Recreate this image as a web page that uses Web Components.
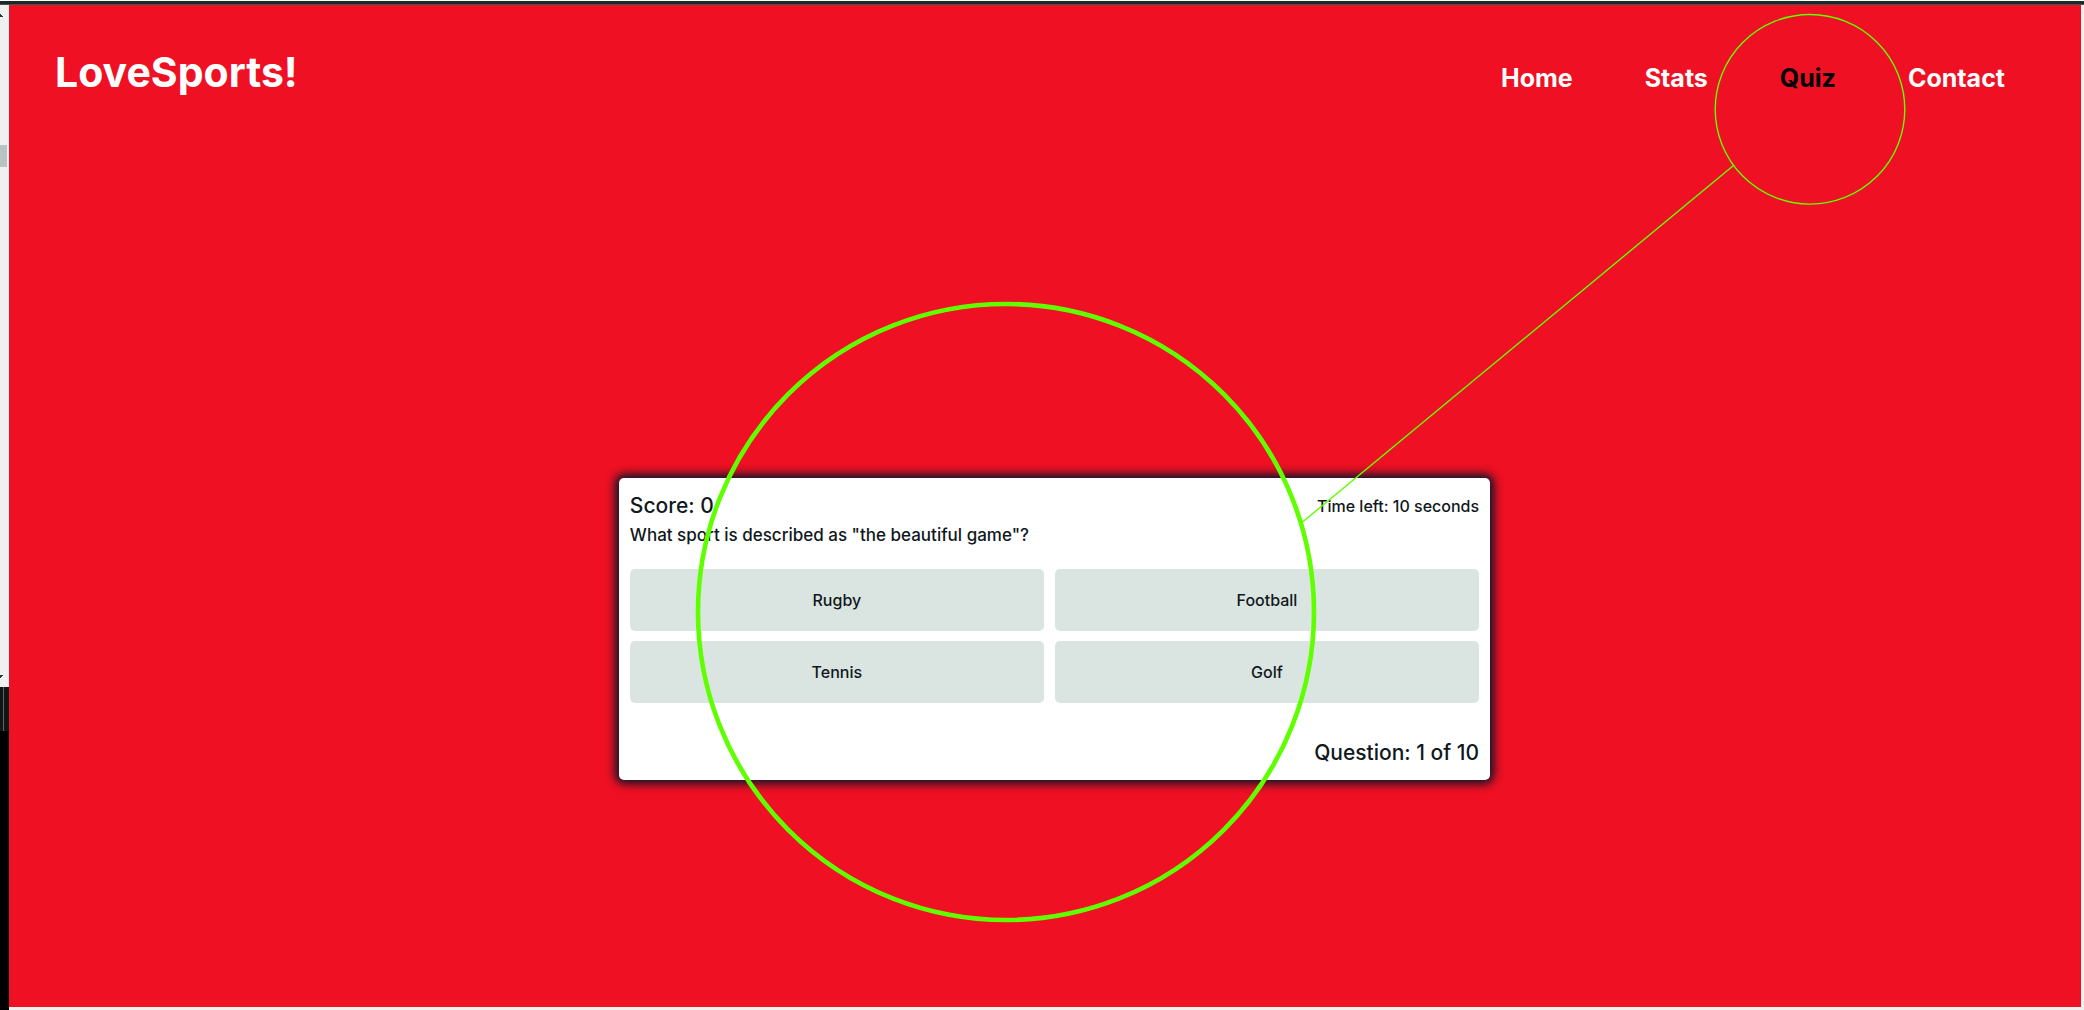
<!DOCTYPE html>
<html lang="en">
<head>
<meta charset="utf-8">
<title>LoveSports!</title>
<style>
html, body { margin: 0; height: 100%; }
body { font-family: Inter, "Liberation Sans", sans-serif; background: #fff; overflow: hidden; }
</style>
</head>
<body>
<sports-frame>
  <site-header>
    <nav-link href="#home">Home</nav-link>
    <nav-link href="#stats">Stats</nav-link>
    <nav-link href="#quiz" current>Quiz</nav-link>
    <nav-link href="#contact">Contact</nav-link>
  </site-header>
  <quiz-card>
    <quiz-answer>Rugby</quiz-answer>
    <quiz-answer>Football</quiz-answer>
    <quiz-answer>Tennis</quiz-answer>
    <quiz-answer>Golf</quiz-answer>
  </quiz-card>
</sports-frame>
<script>
function define(name, markup, setup) {
  customElements.define(name, class extends HTMLElement {
    constructor() {
      super();
      this.attachShadow({ mode: "open" }).innerHTML = markup;
    }
    connectedCallback() { if (setup) setup(this, this.shadowRoot); }
  });
}

define("nav-link", `
<style>
:host { display: block; }
a { color: #fff; text-decoration: none; font-size: 25px; line-height: 32px; font-weight: 700; }
:host([current]) a { color: #000; }
</style>
<a><slot></slot></a>`, (host, root) => {
  root.querySelector("a").href = host.getAttribute("href");
});

define("site-header", `
<style>
:host { display: block; color: #fff; }
header { display: flex; justify-content: space-between; align-items: flex-start; padding: 41px 76px 0 46px; }
h1 { margin: 0; font-size: 41px; line-height: 52px; font-weight: 700; }
nav { display: flex; gap: 72px; padding-top: 16px; }
</style>
<header><h1>LoveSports!</h1><nav aria-label="Main"><slot></slot></nav></header>`);

define("quiz-answer", `
<style>
:host { display: block; }
button { display: block; width: 100%; border: 0; border-radius: 5px; margin: 0; padding: 21px 0; background: #dae4e0;
  color: #101820; font-family: inherit; font-size: 16px; line-height: 20px; font-weight: 500; }
</style>
<button type="button"><slot></slot></button>`);

define("quiz-card", `
<style>
:host { display: block; }
section { box-sizing: border-box; padding: 15px 11px 14px; background: #fff; color: #101820; border-radius: 5px;
  box-shadow: 0 0 10px 4px #0a1428; }
.top { display: flex; justify-content: space-between; align-items: center; line-height: 26px; }
.score { font-size: 21px; font-weight: 500; }
.time { font-size: 16px; font-weight: 500; }
h2 { margin: 3px 0 21px; font-size: 17px; line-height: 26px; font-weight: 500; }
.answers { display: grid; grid-template-columns: auto auto; gap: 10px 11px; }
.count { margin: 36px 0 0; text-align: right; font-size: 21px; line-height: 27px; font-weight: 500; }
</style>
<section>
  <div class="top"><span class="score">Score: 0</span><span class="time">Time left: 10 seconds</span></div>
  <h2>What sport is described as "the beautiful game"?</h2>
  <div class="answers"><slot></slot></div>
  <p class="count">Question: 1 of 10</p>
</section>`, (host, root) => {
  // Slotted answers take part in the grid directly.
  root.querySelector("slot").style.display = "contents";
});

define("scroll-rail", `
<style>
:host { display: flex; flex-direction: column; width: 9px; background: #000; }
.track { height: calc(68% - 1px); background: #eef1f0; display: flex; flex-direction: column; }
.track svg { display: block; flex: none; }
.thumb { width: 7px; height: 22px; margin-top: 128px; background: #b7c4c1; }
.down { margin-top: auto; padding-bottom: 9px; }
.bar { height: 44px; background: #101616; display: flex; }
.bar i { width: 1px; margin-left: 3px; background: #5c6868; }
</style>
<div class="track">
  <svg width="9" height="12" viewBox="0 0 9 12"><path d="M0 9h1v1h1v1h1v1H0z" fill="#2c3838"/></svg>
  <div class="thumb"></div>
  <svg class="down" width="9" height="3" viewBox="0 0 9 3"><path d="M0 0h3v1H2v1H1v1H0z" fill="#2c3838"/></svg>
</div>
<div class="bar"><i></i></div>`);

define("callout-rings", `
<style>
:host { position: absolute; inset: 0; pointer-events: none; }
svg { display: block; width: 100%; height: 100%; }
</style>
<svg viewBox="0 0 2084 1010" fill="none" stroke="#60ff00" aria-hidden="true">
  <circle cx="1006" cy="612" r="308" stroke-width="4.6"/>
  <circle cx="1810" cy="109.3" r="94.8" stroke-width="1.4"/>
  <path d="M1733.5 165.5 1302.5 522" stroke-width="1.4"/>
</svg>`);

define("sports-frame", `
<style>
:host { position: relative; display: flex; flex-direction: column; min-height: 100vh; box-sizing: border-box; padding-top: 1px; }
.edge { height: 3px; background: #1b2928; border-bottom: 1px solid #3f5552; }
.row { flex: 1; display: flex; }
.page { flex: 1; background: #ef1023; display: flex; flex-direction: column; border: solid #eef1f0; border-width: 0 3px 3px 0; }
main { flex: 1; display: grid; place-items: center; padding: 152px 0 0 19px; }
::slotted(quiz-card) { width: calc(42vw - 4px); min-width: 480px; }
</style>
<div class="edge"></div>
<div class="row">
  <scroll-rail></scroll-rail>
  <div class="page"><slot name="header"></slot><main><slot></slot></main></div>
</div>
<callout-rings></callout-rings>`);

document.querySelector("site-header").slot = "header";
</script>
</body>
</html>
